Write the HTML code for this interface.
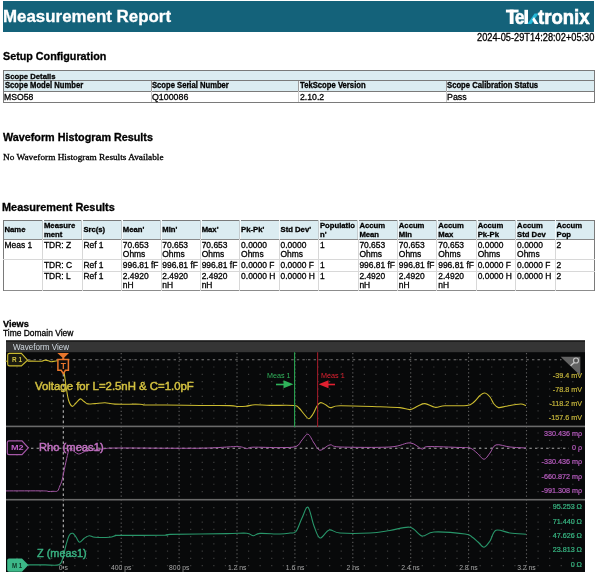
<!DOCTYPE html>
<html><head><meta charset="utf-8"><style>
html,body{margin:0;padding:0;background:#fff;width:600px;height:576px;overflow:hidden;position:relative}
#wrap{position:absolute;left:0;top:0;width:600px;height:576px;filter:blur(0.4px)}
</style></head><body><div id="wrap">
<div style="position:absolute;left:3px;top:1px;width:591px;height:31px;background:#14627a;z-index:1;"></div><div style="position:absolute;left:3.3px;top:70.3px;width:591.4000000000001px;height:20.700000000000003px;background:#dbecf1;z-index:1;"></div><div style="position:absolute;left:3.3px;top:69.8px;width:591.4000000000001px;height:1.2000000000000028px;background:#7a7a7a;z-index:2;"></div><div style="position:absolute;left:3.3px;top:80.2px;width:591.4000000000001px;height:1.2000000000000028px;background:#7a7a7a;z-index:2;"></div><div style="position:absolute;left:3.3px;top:90.5px;width:591.4000000000001px;height:1.2000000000000028px;background:#7a7a7a;z-index:2;"></div><div style="position:absolute;left:3.3px;top:101.5px;width:591.4000000000001px;height:1.1999999999999886px;background:#7a7a7a;z-index:2;"></div><div style="position:absolute;left:2.8px;top:70.3px;width:1.2000000000000002px;height:31.799999999999997px;background:#7a7a7a;z-index:2;"></div><div style="position:absolute;left:594.0px;top:70.3px;width:1.2000000000000455px;height:31.799999999999997px;background:#7a7a7a;z-index:2;"></div><div style="position:absolute;left:150.55000000000004px;top:80.7px;width:1.0px;height:10.299999999999997px;background:#9c9c9c;z-index:2;"></div><div style="position:absolute;left:151.55000000000004px;top:80.7px;width:0.5px;height:10.299999999999997px;background:#f4f9fa;z-index:2;"></div><div style="position:absolute;left:150.55000000000004px;top:91.0px;width:1.0px;height:11.099999999999994px;background:#c8c8c8;z-index:2;"></div><div style="position:absolute;left:298.40000000000003px;top:80.7px;width:1.0px;height:10.299999999999997px;background:#9c9c9c;z-index:2;"></div><div style="position:absolute;left:299.40000000000003px;top:80.7px;width:0.5px;height:10.299999999999997px;background:#f4f9fa;z-index:2;"></div><div style="position:absolute;left:298.40000000000003px;top:91.0px;width:1.0px;height:11.099999999999994px;background:#c8c8c8;z-index:2;"></div><div style="position:absolute;left:446.25000000000006px;top:80.7px;width:1.0px;height:10.299999999999997px;background:#9c9c9c;z-index:2;"></div><div style="position:absolute;left:447.25000000000006px;top:80.7px;width:0.5px;height:10.299999999999997px;background:#f4f9fa;z-index:2;"></div><div style="position:absolute;left:446.25000000000006px;top:91.0px;width:1.0px;height:11.099999999999994px;background:#c8c8c8;z-index:2;"></div><div style="position:absolute;left:3.3px;top:220.3px;width:591.4000000000001px;height:19.0px;background:#dbecf1;z-index:1;"></div><div style="position:absolute;left:3.3px;top:219.8px;width:591.4000000000001px;height:1.1999999999999886px;background:#7a7a7a;z-index:2;"></div><div style="position:absolute;left:3.3px;top:238.70000000000002px;width:591.4000000000001px;height:1.1999999999999886px;background:#8a8a8a;z-index:2;"></div><div style="position:absolute;left:3.3px;top:290.3px;width:591.4000000000001px;height:1.1999999999999886px;background:#8c8c8c;z-index:2;"></div><div style="position:absolute;left:2.8px;top:220.3px;width:1.2000000000000002px;height:71.0px;background:#7a7a7a;z-index:2;"></div><div style="position:absolute;left:594.0px;top:220.3px;width:1.2000000000000455px;height:71.0px;background:#7a7a7a;z-index:2;"></div><div style="position:absolute;left:42.026666666666664px;top:220.3px;width:0.8000000000000043px;height:19.0px;background:#c4cccf;z-index:2;"></div><div style="position:absolute;left:42.82666666666667px;top:220.3px;width:0.6000000000000014px;height:19.0px;background:#f4f9fa;z-index:2;"></div><div style="position:absolute;left:42.22666666666667px;top:239.3px;width:1.0px;height:52.0px;background:#d8d8d8;z-index:2;"></div><div style="position:absolute;left:81.45333333333333px;top:220.3px;width:0.7999999999999972px;height:19.0px;background:#c4cccf;z-index:2;"></div><div style="position:absolute;left:82.25333333333333px;top:220.3px;width:0.6000000000000085px;height:19.0px;background:#f4f9fa;z-index:2;"></div><div style="position:absolute;left:81.65333333333334px;top:239.3px;width:1.0px;height:52.0px;background:#d8d8d8;z-index:2;"></div><div style="position:absolute;left:120.88000000000001px;top:220.3px;width:0.7999999999999972px;height:19.0px;background:#c4cccf;z-index:2;"></div><div style="position:absolute;left:121.68px;top:220.3px;width:0.6000000000000085px;height:19.0px;background:#f4f9fa;z-index:2;"></div><div style="position:absolute;left:121.08000000000001px;top:239.3px;width:1.0px;height:52.0px;background:#d8d8d8;z-index:2;"></div><div style="position:absolute;left:160.3066666666667px;top:220.3px;width:0.799999999999983px;height:19.0px;background:#c4cccf;z-index:2;"></div><div style="position:absolute;left:161.10666666666668px;top:220.3px;width:0.5999999999999943px;height:19.0px;background:#f4f9fa;z-index:2;"></div><div style="position:absolute;left:160.5066666666667px;top:239.3px;width:1.0px;height:52.0px;background:#d8d8d8;z-index:2;"></div><div style="position:absolute;left:199.73333333333338px;top:220.3px;width:0.799999999999983px;height:19.0px;background:#c4cccf;z-index:2;"></div><div style="position:absolute;left:200.53333333333336px;top:220.3px;width:0.5999999999999943px;height:19.0px;background:#f4f9fa;z-index:2;"></div><div style="position:absolute;left:199.93333333333337px;top:239.3px;width:1.0px;height:52.0px;background:#d8d8d8;z-index:2;"></div><div style="position:absolute;left:239.16000000000005px;top:220.3px;width:0.799999999999983px;height:19.0px;background:#c4cccf;z-index:2;"></div><div style="position:absolute;left:239.96000000000004px;top:220.3px;width:0.5999999999999943px;height:19.0px;background:#f4f9fa;z-index:2;"></div><div style="position:absolute;left:239.36000000000004px;top:239.3px;width:1.0px;height:52.0px;background:#d8d8d8;z-index:2;"></div><div style="position:absolute;left:278.58666666666676px;top:220.3px;width:0.8000000000000114px;height:19.0px;background:#c4cccf;z-index:2;"></div><div style="position:absolute;left:279.38666666666677px;top:220.3px;width:0.5999999999999659px;height:19.0px;background:#f4f9fa;z-index:2;"></div><div style="position:absolute;left:278.78666666666675px;top:239.3px;width:1.0px;height:52.0px;background:#d8d8d8;z-index:2;"></div><div style="position:absolute;left:318.0133333333334px;top:220.3px;width:0.8000000000000114px;height:19.0px;background:#c4cccf;z-index:2;"></div><div style="position:absolute;left:318.8133333333334px;top:220.3px;width:0.5999999999999659px;height:19.0px;background:#f4f9fa;z-index:2;"></div><div style="position:absolute;left:318.21333333333337px;top:239.3px;width:1.0px;height:52.0px;background:#d8d8d8;z-index:2;"></div><div style="position:absolute;left:357.44000000000005px;top:220.3px;width:0.8000000000000114px;height:19.0px;background:#c4cccf;z-index:2;"></div><div style="position:absolute;left:358.24000000000007px;top:220.3px;width:0.5999999999999659px;height:19.0px;background:#f4f9fa;z-index:2;"></div><div style="position:absolute;left:357.64000000000004px;top:239.3px;width:1.0px;height:52.0px;background:#d8d8d8;z-index:2;"></div><div style="position:absolute;left:396.86666666666673px;top:220.3px;width:0.8000000000000114px;height:19.0px;background:#c4cccf;z-index:2;"></div><div style="position:absolute;left:397.66666666666674px;top:220.3px;width:0.5999999999999659px;height:19.0px;background:#f4f9fa;z-index:2;"></div><div style="position:absolute;left:397.0666666666667px;top:239.3px;width:1.0px;height:52.0px;background:#d8d8d8;z-index:2;"></div><div style="position:absolute;left:436.29333333333346px;top:220.3px;width:0.8000000000000114px;height:19.0px;background:#c4cccf;z-index:2;"></div><div style="position:absolute;left:437.0933333333335px;top:220.3px;width:0.5999999999999659px;height:19.0px;background:#f4f9fa;z-index:2;"></div><div style="position:absolute;left:436.49333333333345px;top:239.3px;width:1.0px;height:52.0px;background:#d8d8d8;z-index:2;"></div><div style="position:absolute;left:475.7200000000001px;top:220.3px;width:0.8000000000000114px;height:19.0px;background:#c4cccf;z-index:2;"></div><div style="position:absolute;left:476.5200000000001px;top:220.3px;width:0.5999999999999659px;height:19.0px;background:#f4f9fa;z-index:2;"></div><div style="position:absolute;left:475.9200000000001px;top:239.3px;width:1.0px;height:52.0px;background:#d8d8d8;z-index:2;"></div><div style="position:absolute;left:515.1466666666666px;top:220.3px;width:0.8000000000000682px;height:19.0px;background:#c4cccf;z-index:2;"></div><div style="position:absolute;left:515.9466666666667px;top:220.3px;width:0.6000000000000227px;height:19.0px;background:#f4f9fa;z-index:2;"></div><div style="position:absolute;left:515.3466666666667px;top:239.3px;width:1.0px;height:52.0px;background:#d8d8d8;z-index:2;"></div><div style="position:absolute;left:554.5733333333334px;top:220.3px;width:0.8000000000000682px;height:19.0px;background:#c4cccf;z-index:2;"></div><div style="position:absolute;left:555.3733333333334px;top:220.3px;width:0.6000000000000227px;height:19.0px;background:#f4f9fa;z-index:2;"></div><div style="position:absolute;left:554.7733333333334px;top:239.3px;width:1.0px;height:52.0px;background:#d8d8d8;z-index:2;"></div><div style="position:absolute;left:3.3px;top:259.2px;width:591.4000000000001px;height:1.0px;background:#d8d8d8;z-index:2;"></div><div style="position:absolute;left:42.72666666666667px;top:270.5px;width:551.9733333333334px;height:1.0px;background:#d8d8d8;z-index:2;"></div>
<svg style="position:absolute;left:0;top:0;z-index:3" width="600" height="576" viewBox="0 0 600 576">
<rect x="505.9" y="9.6" width="12.7" height="2.9" fill="#fff"/><rect x="509.7" y="9.6" width="3.9" height="14.4" fill="#fff"/><rect x="524.4" y="9.8" width="3.6" height="14.2" fill="#fff"/><path d="M527.4,24 L534.6,13.4 H538.6 L531.4,24 Z" fill="#25b8d8"/><path d="M532.2,19.6 L534,17 L538.6,24 H534.6 Z" fill="#fff"/><rect x="6" y="340.5" width="579" height="231.5" fill="#08090a"/><rect x="6" y="340.5" width="579" height="11.699999999999989" fill="#353535"/><rect x="6" y="340.7" width="579" height="1" fill="#151515"/><path d="M16.38,359.70h1.2M16.38,367.02h1.2M16.38,374.34h1.2M16.38,381.66h1.2M16.38,388.98h1.2M16.38,396.30h1.2M16.38,403.62h1.2M16.38,410.94h1.2M16.38,418.26h1.2M27.96,359.70h1.2M27.96,367.02h1.2M27.96,374.34h1.2M27.96,381.66h1.2M27.96,388.98h1.2M27.96,396.30h1.2M27.96,403.62h1.2M27.96,410.94h1.2M27.96,418.26h1.2M39.54,359.70h1.2M39.54,367.02h1.2M39.54,374.34h1.2M39.54,381.66h1.2M39.54,388.98h1.2M39.54,396.30h1.2M39.54,403.62h1.2M39.54,410.94h1.2M39.54,418.26h1.2M51.12,359.70h1.2M51.12,367.02h1.2M51.12,374.34h1.2M51.12,381.66h1.2M51.12,388.98h1.2M51.12,396.30h1.2M51.12,403.62h1.2M51.12,410.94h1.2M51.12,418.26h1.2M74.28,359.70h1.2M74.28,367.02h1.2M74.28,374.34h1.2M74.28,381.66h1.2M74.28,388.98h1.2M74.28,396.30h1.2M74.28,403.62h1.2M74.28,410.94h1.2M74.28,418.26h1.2M85.86,359.70h1.2M85.86,367.02h1.2M85.86,374.34h1.2M85.86,381.66h1.2M85.86,388.98h1.2M85.86,396.30h1.2M85.86,403.62h1.2M85.86,410.94h1.2M85.86,418.26h1.2M97.44,359.70h1.2M97.44,367.02h1.2M97.44,374.34h1.2M97.44,381.66h1.2M97.44,388.98h1.2M97.44,396.30h1.2M97.44,403.62h1.2M97.44,410.94h1.2M97.44,418.26h1.2M109.02,359.70h1.2M109.02,367.02h1.2M109.02,374.34h1.2M109.02,381.66h1.2M109.02,388.98h1.2M109.02,396.30h1.2M109.02,403.62h1.2M109.02,410.94h1.2M109.02,418.26h1.2M132.18,359.70h1.2M132.18,367.02h1.2M132.18,374.34h1.2M132.18,381.66h1.2M132.18,388.98h1.2M132.18,396.30h1.2M132.18,403.62h1.2M132.18,410.94h1.2M132.18,418.26h1.2M143.76,359.70h1.2M143.76,367.02h1.2M143.76,374.34h1.2M143.76,381.66h1.2M143.76,388.98h1.2M143.76,396.30h1.2M143.76,403.62h1.2M143.76,410.94h1.2M143.76,418.26h1.2M155.34,359.70h1.2M155.34,367.02h1.2M155.34,374.34h1.2M155.34,381.66h1.2M155.34,388.98h1.2M155.34,396.30h1.2M155.34,403.62h1.2M155.34,410.94h1.2M155.34,418.26h1.2M166.92,359.70h1.2M166.92,367.02h1.2M166.92,374.34h1.2M166.92,381.66h1.2M166.92,388.98h1.2M166.92,396.30h1.2M166.92,403.62h1.2M166.92,410.94h1.2M166.92,418.26h1.2M190.08,359.70h1.2M190.08,367.02h1.2M190.08,374.34h1.2M190.08,381.66h1.2M190.08,388.98h1.2M190.08,396.30h1.2M190.08,403.62h1.2M190.08,410.94h1.2M190.08,418.26h1.2M201.66,359.70h1.2M201.66,367.02h1.2M201.66,374.34h1.2M201.66,381.66h1.2M201.66,388.98h1.2M201.66,396.30h1.2M201.66,403.62h1.2M201.66,410.94h1.2M201.66,418.26h1.2M213.24,359.70h1.2M213.24,367.02h1.2M213.24,374.34h1.2M213.24,381.66h1.2M213.24,388.98h1.2M213.24,396.30h1.2M213.24,403.62h1.2M213.24,410.94h1.2M213.24,418.26h1.2M224.82,359.70h1.2M224.82,367.02h1.2M224.82,374.34h1.2M224.82,381.66h1.2M224.82,388.98h1.2M224.82,396.30h1.2M224.82,403.62h1.2M224.82,410.94h1.2M224.82,418.26h1.2M247.98,359.70h1.2M247.98,367.02h1.2M247.98,374.34h1.2M247.98,381.66h1.2M247.98,388.98h1.2M247.98,396.30h1.2M247.98,403.62h1.2M247.98,410.94h1.2M247.98,418.26h1.2M259.56,359.70h1.2M259.56,367.02h1.2M259.56,374.34h1.2M259.56,381.66h1.2M259.56,388.98h1.2M259.56,396.30h1.2M259.56,403.62h1.2M259.56,410.94h1.2M259.56,418.26h1.2M271.14,359.70h1.2M271.14,367.02h1.2M271.14,374.34h1.2M271.14,381.66h1.2M271.14,388.98h1.2M271.14,396.30h1.2M271.14,403.62h1.2M271.14,410.94h1.2M271.14,418.26h1.2M282.72,359.70h1.2M282.72,367.02h1.2M282.72,374.34h1.2M282.72,381.66h1.2M282.72,388.98h1.2M282.72,396.30h1.2M282.72,403.62h1.2M282.72,410.94h1.2M282.72,418.26h1.2M305.88,359.70h1.2M305.88,367.02h1.2M305.88,374.34h1.2M305.88,381.66h1.2M305.88,388.98h1.2M305.88,396.30h1.2M305.88,403.62h1.2M305.88,410.94h1.2M305.88,418.26h1.2M317.46,359.70h1.2M317.46,367.02h1.2M317.46,374.34h1.2M317.46,381.66h1.2M317.46,388.98h1.2M317.46,396.30h1.2M317.46,403.62h1.2M317.46,410.94h1.2M317.46,418.26h1.2M329.04,359.70h1.2M329.04,367.02h1.2M329.04,374.34h1.2M329.04,381.66h1.2M329.04,388.98h1.2M329.04,396.30h1.2M329.04,403.62h1.2M329.04,410.94h1.2M329.04,418.26h1.2M340.62,359.70h1.2M340.62,367.02h1.2M340.62,374.34h1.2M340.62,381.66h1.2M340.62,388.98h1.2M340.62,396.30h1.2M340.62,403.62h1.2M340.62,410.94h1.2M340.62,418.26h1.2M363.78,359.70h1.2M363.78,367.02h1.2M363.78,374.34h1.2M363.78,381.66h1.2M363.78,388.98h1.2M363.78,396.30h1.2M363.78,403.62h1.2M363.78,410.94h1.2M363.78,418.26h1.2M375.36,359.70h1.2M375.36,367.02h1.2M375.36,374.34h1.2M375.36,381.66h1.2M375.36,388.98h1.2M375.36,396.30h1.2M375.36,403.62h1.2M375.36,410.94h1.2M375.36,418.26h1.2M386.94,359.70h1.2M386.94,367.02h1.2M386.94,374.34h1.2M386.94,381.66h1.2M386.94,388.98h1.2M386.94,396.30h1.2M386.94,403.62h1.2M386.94,410.94h1.2M386.94,418.26h1.2M398.52,359.70h1.2M398.52,367.02h1.2M398.52,374.34h1.2M398.52,381.66h1.2M398.52,388.98h1.2M398.52,396.30h1.2M398.52,403.62h1.2M398.52,410.94h1.2M398.52,418.26h1.2M421.68,359.70h1.2M421.68,367.02h1.2M421.68,374.34h1.2M421.68,381.66h1.2M421.68,388.98h1.2M421.68,396.30h1.2M421.68,403.62h1.2M421.68,410.94h1.2M421.68,418.26h1.2M433.26,359.70h1.2M433.26,367.02h1.2M433.26,374.34h1.2M433.26,381.66h1.2M433.26,388.98h1.2M433.26,396.30h1.2M433.26,403.62h1.2M433.26,410.94h1.2M433.26,418.26h1.2M444.84,359.70h1.2M444.84,367.02h1.2M444.84,374.34h1.2M444.84,381.66h1.2M444.84,388.98h1.2M444.84,396.30h1.2M444.84,403.62h1.2M444.84,410.94h1.2M444.84,418.26h1.2M456.42,359.70h1.2M456.42,367.02h1.2M456.42,374.34h1.2M456.42,381.66h1.2M456.42,388.98h1.2M456.42,396.30h1.2M456.42,403.62h1.2M456.42,410.94h1.2M456.42,418.26h1.2M479.58,359.70h1.2M479.58,367.02h1.2M479.58,374.34h1.2M479.58,381.66h1.2M479.58,388.98h1.2M479.58,396.30h1.2M479.58,403.62h1.2M479.58,410.94h1.2M479.58,418.26h1.2M491.16,359.70h1.2M491.16,367.02h1.2M491.16,374.34h1.2M491.16,381.66h1.2M491.16,388.98h1.2M491.16,396.30h1.2M491.16,403.62h1.2M491.16,410.94h1.2M491.16,418.26h1.2M502.74,359.70h1.2M502.74,367.02h1.2M502.74,374.34h1.2M502.74,381.66h1.2M502.74,388.98h1.2M502.74,396.30h1.2M502.74,403.62h1.2M502.74,410.94h1.2M502.74,418.26h1.2M514.32,359.70h1.2M514.32,367.02h1.2M514.32,374.34h1.2M514.32,381.66h1.2M514.32,388.98h1.2M514.32,396.30h1.2M514.32,403.62h1.2M514.32,410.94h1.2M514.32,418.26h1.2M537.48,359.70h1.2M537.48,367.02h1.2M537.48,374.34h1.2M537.48,381.66h1.2M537.48,388.98h1.2M537.48,396.30h1.2M537.48,403.62h1.2M537.48,410.94h1.2M537.48,418.26h1.2M549.06,359.70h1.2M549.06,367.02h1.2M549.06,374.34h1.2M549.06,381.66h1.2M549.06,388.98h1.2M549.06,396.30h1.2M549.06,403.62h1.2M549.06,410.94h1.2M549.06,418.26h1.2M560.64,359.70h1.2M560.64,367.02h1.2M560.64,374.34h1.2M560.64,381.66h1.2M560.64,388.98h1.2M560.64,396.30h1.2M560.64,403.62h1.2M560.64,410.94h1.2M560.64,418.26h1.2M572.22,359.70h1.2M572.22,367.02h1.2M572.22,374.34h1.2M572.22,381.66h1.2M572.22,388.98h1.2M572.22,396.30h1.2M572.22,403.62h1.2M572.22,410.94h1.2M572.22,418.26h1.2M16.38,433.00h1.2M16.38,440.32h1.2M16.38,447.64h1.2M16.38,454.96h1.2M16.38,462.28h1.2M16.38,469.60h1.2M16.38,476.92h1.2M16.38,484.24h1.2M16.38,491.56h1.2M27.96,433.00h1.2M27.96,440.32h1.2M27.96,447.64h1.2M27.96,454.96h1.2M27.96,462.28h1.2M27.96,469.60h1.2M27.96,476.92h1.2M27.96,484.24h1.2M27.96,491.56h1.2M39.54,433.00h1.2M39.54,440.32h1.2M39.54,447.64h1.2M39.54,454.96h1.2M39.54,462.28h1.2M39.54,469.60h1.2M39.54,476.92h1.2M39.54,484.24h1.2M39.54,491.56h1.2M51.12,433.00h1.2M51.12,440.32h1.2M51.12,447.64h1.2M51.12,454.96h1.2M51.12,462.28h1.2M51.12,469.60h1.2M51.12,476.92h1.2M51.12,484.24h1.2M51.12,491.56h1.2M74.28,433.00h1.2M74.28,440.32h1.2M74.28,447.64h1.2M74.28,454.96h1.2M74.28,462.28h1.2M74.28,469.60h1.2M74.28,476.92h1.2M74.28,484.24h1.2M74.28,491.56h1.2M85.86,433.00h1.2M85.86,440.32h1.2M85.86,447.64h1.2M85.86,454.96h1.2M85.86,462.28h1.2M85.86,469.60h1.2M85.86,476.92h1.2M85.86,484.24h1.2M85.86,491.56h1.2M97.44,433.00h1.2M97.44,440.32h1.2M97.44,447.64h1.2M97.44,454.96h1.2M97.44,462.28h1.2M97.44,469.60h1.2M97.44,476.92h1.2M97.44,484.24h1.2M97.44,491.56h1.2M109.02,433.00h1.2M109.02,440.32h1.2M109.02,447.64h1.2M109.02,454.96h1.2M109.02,462.28h1.2M109.02,469.60h1.2M109.02,476.92h1.2M109.02,484.24h1.2M109.02,491.56h1.2M132.18,433.00h1.2M132.18,440.32h1.2M132.18,447.64h1.2M132.18,454.96h1.2M132.18,462.28h1.2M132.18,469.60h1.2M132.18,476.92h1.2M132.18,484.24h1.2M132.18,491.56h1.2M143.76,433.00h1.2M143.76,440.32h1.2M143.76,447.64h1.2M143.76,454.96h1.2M143.76,462.28h1.2M143.76,469.60h1.2M143.76,476.92h1.2M143.76,484.24h1.2M143.76,491.56h1.2M155.34,433.00h1.2M155.34,440.32h1.2M155.34,447.64h1.2M155.34,454.96h1.2M155.34,462.28h1.2M155.34,469.60h1.2M155.34,476.92h1.2M155.34,484.24h1.2M155.34,491.56h1.2M166.92,433.00h1.2M166.92,440.32h1.2M166.92,447.64h1.2M166.92,454.96h1.2M166.92,462.28h1.2M166.92,469.60h1.2M166.92,476.92h1.2M166.92,484.24h1.2M166.92,491.56h1.2M190.08,433.00h1.2M190.08,440.32h1.2M190.08,447.64h1.2M190.08,454.96h1.2M190.08,462.28h1.2M190.08,469.60h1.2M190.08,476.92h1.2M190.08,484.24h1.2M190.08,491.56h1.2M201.66,433.00h1.2M201.66,440.32h1.2M201.66,447.64h1.2M201.66,454.96h1.2M201.66,462.28h1.2M201.66,469.60h1.2M201.66,476.92h1.2M201.66,484.24h1.2M201.66,491.56h1.2M213.24,433.00h1.2M213.24,440.32h1.2M213.24,447.64h1.2M213.24,454.96h1.2M213.24,462.28h1.2M213.24,469.60h1.2M213.24,476.92h1.2M213.24,484.24h1.2M213.24,491.56h1.2M224.82,433.00h1.2M224.82,440.32h1.2M224.82,447.64h1.2M224.82,454.96h1.2M224.82,462.28h1.2M224.82,469.60h1.2M224.82,476.92h1.2M224.82,484.24h1.2M224.82,491.56h1.2M247.98,433.00h1.2M247.98,440.32h1.2M247.98,447.64h1.2M247.98,454.96h1.2M247.98,462.28h1.2M247.98,469.60h1.2M247.98,476.92h1.2M247.98,484.24h1.2M247.98,491.56h1.2M259.56,433.00h1.2M259.56,440.32h1.2M259.56,447.64h1.2M259.56,454.96h1.2M259.56,462.28h1.2M259.56,469.60h1.2M259.56,476.92h1.2M259.56,484.24h1.2M259.56,491.56h1.2M271.14,433.00h1.2M271.14,440.32h1.2M271.14,447.64h1.2M271.14,454.96h1.2M271.14,462.28h1.2M271.14,469.60h1.2M271.14,476.92h1.2M271.14,484.24h1.2M271.14,491.56h1.2M282.72,433.00h1.2M282.72,440.32h1.2M282.72,447.64h1.2M282.72,454.96h1.2M282.72,462.28h1.2M282.72,469.60h1.2M282.72,476.92h1.2M282.72,484.24h1.2M282.72,491.56h1.2M305.88,433.00h1.2M305.88,440.32h1.2M305.88,447.64h1.2M305.88,454.96h1.2M305.88,462.28h1.2M305.88,469.60h1.2M305.88,476.92h1.2M305.88,484.24h1.2M305.88,491.56h1.2M317.46,433.00h1.2M317.46,440.32h1.2M317.46,447.64h1.2M317.46,454.96h1.2M317.46,462.28h1.2M317.46,469.60h1.2M317.46,476.92h1.2M317.46,484.24h1.2M317.46,491.56h1.2M329.04,433.00h1.2M329.04,440.32h1.2M329.04,447.64h1.2M329.04,454.96h1.2M329.04,462.28h1.2M329.04,469.60h1.2M329.04,476.92h1.2M329.04,484.24h1.2M329.04,491.56h1.2M340.62,433.00h1.2M340.62,440.32h1.2M340.62,447.64h1.2M340.62,454.96h1.2M340.62,462.28h1.2M340.62,469.60h1.2M340.62,476.92h1.2M340.62,484.24h1.2M340.62,491.56h1.2M363.78,433.00h1.2M363.78,440.32h1.2M363.78,447.64h1.2M363.78,454.96h1.2M363.78,462.28h1.2M363.78,469.60h1.2M363.78,476.92h1.2M363.78,484.24h1.2M363.78,491.56h1.2M375.36,433.00h1.2M375.36,440.32h1.2M375.36,447.64h1.2M375.36,454.96h1.2M375.36,462.28h1.2M375.36,469.60h1.2M375.36,476.92h1.2M375.36,484.24h1.2M375.36,491.56h1.2M386.94,433.00h1.2M386.94,440.32h1.2M386.94,447.64h1.2M386.94,454.96h1.2M386.94,462.28h1.2M386.94,469.60h1.2M386.94,476.92h1.2M386.94,484.24h1.2M386.94,491.56h1.2M398.52,433.00h1.2M398.52,440.32h1.2M398.52,447.64h1.2M398.52,454.96h1.2M398.52,462.28h1.2M398.52,469.60h1.2M398.52,476.92h1.2M398.52,484.24h1.2M398.52,491.56h1.2M421.68,433.00h1.2M421.68,440.32h1.2M421.68,447.64h1.2M421.68,454.96h1.2M421.68,462.28h1.2M421.68,469.60h1.2M421.68,476.92h1.2M421.68,484.24h1.2M421.68,491.56h1.2M433.26,433.00h1.2M433.26,440.32h1.2M433.26,447.64h1.2M433.26,454.96h1.2M433.26,462.28h1.2M433.26,469.60h1.2M433.26,476.92h1.2M433.26,484.24h1.2M433.26,491.56h1.2M444.84,433.00h1.2M444.84,440.32h1.2M444.84,447.64h1.2M444.84,454.96h1.2M444.84,462.28h1.2M444.84,469.60h1.2M444.84,476.92h1.2M444.84,484.24h1.2M444.84,491.56h1.2M456.42,433.00h1.2M456.42,440.32h1.2M456.42,447.64h1.2M456.42,454.96h1.2M456.42,462.28h1.2M456.42,469.60h1.2M456.42,476.92h1.2M456.42,484.24h1.2M456.42,491.56h1.2M479.58,433.00h1.2M479.58,440.32h1.2M479.58,447.64h1.2M479.58,454.96h1.2M479.58,462.28h1.2M479.58,469.60h1.2M479.58,476.92h1.2M479.58,484.24h1.2M479.58,491.56h1.2M491.16,433.00h1.2M491.16,440.32h1.2M491.16,447.64h1.2M491.16,454.96h1.2M491.16,462.28h1.2M491.16,469.60h1.2M491.16,476.92h1.2M491.16,484.24h1.2M491.16,491.56h1.2M502.74,433.00h1.2M502.74,440.32h1.2M502.74,447.64h1.2M502.74,454.96h1.2M502.74,462.28h1.2M502.74,469.60h1.2M502.74,476.92h1.2M502.74,484.24h1.2M502.74,491.56h1.2M514.32,433.00h1.2M514.32,440.32h1.2M514.32,447.64h1.2M514.32,454.96h1.2M514.32,462.28h1.2M514.32,469.60h1.2M514.32,476.92h1.2M514.32,484.24h1.2M514.32,491.56h1.2M537.48,433.00h1.2M537.48,440.32h1.2M537.48,447.64h1.2M537.48,454.96h1.2M537.48,462.28h1.2M537.48,469.60h1.2M537.48,476.92h1.2M537.48,484.24h1.2M537.48,491.56h1.2M549.06,433.00h1.2M549.06,440.32h1.2M549.06,447.64h1.2M549.06,454.96h1.2M549.06,462.28h1.2M549.06,469.60h1.2M549.06,476.92h1.2M549.06,484.24h1.2M549.06,491.56h1.2M560.64,433.00h1.2M560.64,440.32h1.2M560.64,447.64h1.2M560.64,454.96h1.2M560.64,462.28h1.2M560.64,469.60h1.2M560.64,476.92h1.2M560.64,484.24h1.2M560.64,491.56h1.2M572.22,433.00h1.2M572.22,440.32h1.2M572.22,447.64h1.2M572.22,454.96h1.2M572.22,462.28h1.2M572.22,469.60h1.2M572.22,476.92h1.2M572.22,484.24h1.2M572.22,491.56h1.2M16.38,507.60h1.2M16.38,514.85h1.2M16.38,522.10h1.2M16.38,529.35h1.2M16.38,536.60h1.2M16.38,543.85h1.2M16.38,551.10h1.2M16.38,558.35h1.2M16.38,565.60h1.2M27.96,507.60h1.2M27.96,514.85h1.2M27.96,522.10h1.2M27.96,529.35h1.2M27.96,536.60h1.2M27.96,543.85h1.2M27.96,551.10h1.2M27.96,558.35h1.2M27.96,565.60h1.2M39.54,507.60h1.2M39.54,514.85h1.2M39.54,522.10h1.2M39.54,529.35h1.2M39.54,536.60h1.2M39.54,543.85h1.2M39.54,551.10h1.2M39.54,558.35h1.2M39.54,565.60h1.2M51.12,507.60h1.2M51.12,514.85h1.2M51.12,522.10h1.2M51.12,529.35h1.2M51.12,536.60h1.2M51.12,543.85h1.2M51.12,551.10h1.2M51.12,558.35h1.2M51.12,565.60h1.2M74.28,507.60h1.2M74.28,514.85h1.2M74.28,522.10h1.2M74.28,529.35h1.2M74.28,536.60h1.2M74.28,543.85h1.2M74.28,551.10h1.2M74.28,558.35h1.2M74.28,565.60h1.2M85.86,507.60h1.2M85.86,514.85h1.2M85.86,522.10h1.2M85.86,529.35h1.2M85.86,536.60h1.2M85.86,543.85h1.2M85.86,551.10h1.2M85.86,558.35h1.2M85.86,565.60h1.2M97.44,507.60h1.2M97.44,514.85h1.2M97.44,522.10h1.2M97.44,529.35h1.2M97.44,536.60h1.2M97.44,543.85h1.2M97.44,551.10h1.2M97.44,558.35h1.2M97.44,565.60h1.2M109.02,507.60h1.2M109.02,514.85h1.2M109.02,522.10h1.2M109.02,529.35h1.2M109.02,536.60h1.2M109.02,543.85h1.2M109.02,551.10h1.2M109.02,558.35h1.2M109.02,565.60h1.2M132.18,507.60h1.2M132.18,514.85h1.2M132.18,522.10h1.2M132.18,529.35h1.2M132.18,536.60h1.2M132.18,543.85h1.2M132.18,551.10h1.2M132.18,558.35h1.2M132.18,565.60h1.2M143.76,507.60h1.2M143.76,514.85h1.2M143.76,522.10h1.2M143.76,529.35h1.2M143.76,536.60h1.2M143.76,543.85h1.2M143.76,551.10h1.2M143.76,558.35h1.2M143.76,565.60h1.2M155.34,507.60h1.2M155.34,514.85h1.2M155.34,522.10h1.2M155.34,529.35h1.2M155.34,536.60h1.2M155.34,543.85h1.2M155.34,551.10h1.2M155.34,558.35h1.2M155.34,565.60h1.2M166.92,507.60h1.2M166.92,514.85h1.2M166.92,522.10h1.2M166.92,529.35h1.2M166.92,536.60h1.2M166.92,543.85h1.2M166.92,551.10h1.2M166.92,558.35h1.2M166.92,565.60h1.2M190.08,507.60h1.2M190.08,514.85h1.2M190.08,522.10h1.2M190.08,529.35h1.2M190.08,536.60h1.2M190.08,543.85h1.2M190.08,551.10h1.2M190.08,558.35h1.2M190.08,565.60h1.2M201.66,507.60h1.2M201.66,514.85h1.2M201.66,522.10h1.2M201.66,529.35h1.2M201.66,536.60h1.2M201.66,543.85h1.2M201.66,551.10h1.2M201.66,558.35h1.2M201.66,565.60h1.2M213.24,507.60h1.2M213.24,514.85h1.2M213.24,522.10h1.2M213.24,529.35h1.2M213.24,536.60h1.2M213.24,543.85h1.2M213.24,551.10h1.2M213.24,558.35h1.2M213.24,565.60h1.2M224.82,507.60h1.2M224.82,514.85h1.2M224.82,522.10h1.2M224.82,529.35h1.2M224.82,536.60h1.2M224.82,543.85h1.2M224.82,551.10h1.2M224.82,558.35h1.2M224.82,565.60h1.2M247.98,507.60h1.2M247.98,514.85h1.2M247.98,522.10h1.2M247.98,529.35h1.2M247.98,536.60h1.2M247.98,543.85h1.2M247.98,551.10h1.2M247.98,558.35h1.2M247.98,565.60h1.2M259.56,507.60h1.2M259.56,514.85h1.2M259.56,522.10h1.2M259.56,529.35h1.2M259.56,536.60h1.2M259.56,543.85h1.2M259.56,551.10h1.2M259.56,558.35h1.2M259.56,565.60h1.2M271.14,507.60h1.2M271.14,514.85h1.2M271.14,522.10h1.2M271.14,529.35h1.2M271.14,536.60h1.2M271.14,543.85h1.2M271.14,551.10h1.2M271.14,558.35h1.2M271.14,565.60h1.2M282.72,507.60h1.2M282.72,514.85h1.2M282.72,522.10h1.2M282.72,529.35h1.2M282.72,536.60h1.2M282.72,543.85h1.2M282.72,551.10h1.2M282.72,558.35h1.2M282.72,565.60h1.2M305.88,507.60h1.2M305.88,514.85h1.2M305.88,522.10h1.2M305.88,529.35h1.2M305.88,536.60h1.2M305.88,543.85h1.2M305.88,551.10h1.2M305.88,558.35h1.2M305.88,565.60h1.2M317.46,507.60h1.2M317.46,514.85h1.2M317.46,522.10h1.2M317.46,529.35h1.2M317.46,536.60h1.2M317.46,543.85h1.2M317.46,551.10h1.2M317.46,558.35h1.2M317.46,565.60h1.2M329.04,507.60h1.2M329.04,514.85h1.2M329.04,522.10h1.2M329.04,529.35h1.2M329.04,536.60h1.2M329.04,543.85h1.2M329.04,551.10h1.2M329.04,558.35h1.2M329.04,565.60h1.2M340.62,507.60h1.2M340.62,514.85h1.2M340.62,522.10h1.2M340.62,529.35h1.2M340.62,536.60h1.2M340.62,543.85h1.2M340.62,551.10h1.2M340.62,558.35h1.2M340.62,565.60h1.2M363.78,507.60h1.2M363.78,514.85h1.2M363.78,522.10h1.2M363.78,529.35h1.2M363.78,536.60h1.2M363.78,543.85h1.2M363.78,551.10h1.2M363.78,558.35h1.2M363.78,565.60h1.2M375.36,507.60h1.2M375.36,514.85h1.2M375.36,522.10h1.2M375.36,529.35h1.2M375.36,536.60h1.2M375.36,543.85h1.2M375.36,551.10h1.2M375.36,558.35h1.2M375.36,565.60h1.2M386.94,507.60h1.2M386.94,514.85h1.2M386.94,522.10h1.2M386.94,529.35h1.2M386.94,536.60h1.2M386.94,543.85h1.2M386.94,551.10h1.2M386.94,558.35h1.2M386.94,565.60h1.2M398.52,507.60h1.2M398.52,514.85h1.2M398.52,522.10h1.2M398.52,529.35h1.2M398.52,536.60h1.2M398.52,543.85h1.2M398.52,551.10h1.2M398.52,558.35h1.2M398.52,565.60h1.2M421.68,507.60h1.2M421.68,514.85h1.2M421.68,522.10h1.2M421.68,529.35h1.2M421.68,536.60h1.2M421.68,543.85h1.2M421.68,551.10h1.2M421.68,558.35h1.2M421.68,565.60h1.2M433.26,507.60h1.2M433.26,514.85h1.2M433.26,522.10h1.2M433.26,529.35h1.2M433.26,536.60h1.2M433.26,543.85h1.2M433.26,551.10h1.2M433.26,558.35h1.2M433.26,565.60h1.2M444.84,507.60h1.2M444.84,514.85h1.2M444.84,522.10h1.2M444.84,529.35h1.2M444.84,536.60h1.2M444.84,543.85h1.2M444.84,551.10h1.2M444.84,558.35h1.2M444.84,565.60h1.2M456.42,507.60h1.2M456.42,514.85h1.2M456.42,522.10h1.2M456.42,529.35h1.2M456.42,536.60h1.2M456.42,543.85h1.2M456.42,551.10h1.2M456.42,558.35h1.2M456.42,565.60h1.2M479.58,507.60h1.2M479.58,514.85h1.2M479.58,522.10h1.2M479.58,529.35h1.2M479.58,536.60h1.2M479.58,543.85h1.2M479.58,551.10h1.2M479.58,558.35h1.2M479.58,565.60h1.2M491.16,507.60h1.2M491.16,514.85h1.2M491.16,522.10h1.2M491.16,529.35h1.2M491.16,536.60h1.2M491.16,543.85h1.2M491.16,551.10h1.2M491.16,558.35h1.2M491.16,565.60h1.2M502.74,507.60h1.2M502.74,514.85h1.2M502.74,522.10h1.2M502.74,529.35h1.2M502.74,536.60h1.2M502.74,543.85h1.2M502.74,551.10h1.2M502.74,558.35h1.2M502.74,565.60h1.2M514.32,507.60h1.2M514.32,514.85h1.2M514.32,522.10h1.2M514.32,529.35h1.2M514.32,536.60h1.2M514.32,543.85h1.2M514.32,551.10h1.2M514.32,558.35h1.2M514.32,565.60h1.2M537.48,507.60h1.2M537.48,514.85h1.2M537.48,522.10h1.2M537.48,529.35h1.2M537.48,536.60h1.2M537.48,543.85h1.2M537.48,551.10h1.2M537.48,558.35h1.2M537.48,565.60h1.2M549.06,507.60h1.2M549.06,514.85h1.2M549.06,522.10h1.2M549.06,529.35h1.2M549.06,536.60h1.2M549.06,543.85h1.2M549.06,551.10h1.2M549.06,558.35h1.2M549.06,565.60h1.2M560.64,507.60h1.2M560.64,514.85h1.2M560.64,522.10h1.2M560.64,529.35h1.2M560.64,536.60h1.2M560.64,543.85h1.2M560.64,551.10h1.2M560.64,558.35h1.2M560.64,565.60h1.2M572.22,507.60h1.2M572.22,514.85h1.2M572.22,522.10h1.2M572.22,529.35h1.2M572.22,536.60h1.2M572.22,543.85h1.2M572.22,551.10h1.2M572.22,558.35h1.2M572.22,565.60h1.2" stroke="#3e3e3e" stroke-width="1.2" fill="none"/><line x1="63.3" y1="353" x2="63.3" y2="572" stroke="#b8b8b8" stroke-width="1.1" stroke-dasharray="2.6 2.6"/><line x1="121.19999999999999" y1="353" x2="121.19999999999999" y2="572" stroke="#5e5e5e" stroke-width="1.1" stroke-dasharray="1.3 2.55"/><line x1="179.1" y1="353" x2="179.1" y2="572" stroke="#5e5e5e" stroke-width="1.1" stroke-dasharray="1.3 2.55"/><line x1="237.0" y1="353" x2="237.0" y2="572" stroke="#5e5e5e" stroke-width="1.1" stroke-dasharray="1.3 2.55"/><line x1="294.9" y1="353" x2="294.9" y2="572" stroke="#5e5e5e" stroke-width="1.1" stroke-dasharray="1.3 2.55"/><line x1="352.8" y1="353" x2="352.8" y2="572" stroke="#5e5e5e" stroke-width="1.1" stroke-dasharray="1.3 2.55"/><line x1="410.7" y1="353" x2="410.7" y2="572" stroke="#5e5e5e" stroke-width="1.1" stroke-dasharray="1.3 2.55"/><line x1="468.6" y1="353" x2="468.6" y2="572" stroke="#5e5e5e" stroke-width="1.1" stroke-dasharray="1.3 2.55"/><line x1="526.5" y1="353" x2="526.5" y2="572" stroke="#5e5e5e" stroke-width="1.1" stroke-dasharray="1.3 2.55"/><rect x="6" y="425.6" width="579" height="1.6" fill="#6a6a6a"/><rect x="6" y="498.9" width="579" height="1.6" fill="#6a6a6a"/><line x1="28" y1="359.7" x2="561" y2="359.7" stroke="#767676" stroke-width="1.1" stroke-dasharray="2.4 3.2"/><line x1="31" y1="448.2" x2="569" y2="448.2" stroke="#a8a8a8" stroke-width="1.1" stroke-dasharray="2.4 3.2"/><path d="M27.60,361.10 C29.00,361.12 33.60,361.18 36.00,361.20 C38.40,361.22 40.47,361.38 42.00,361.20 C43.53,361.02 43.97,360.12 45.20,360.10 C46.43,360.08 48.35,360.83 49.40,361.10 C50.45,361.37 50.40,361.72 51.50,361.70 C52.60,361.68 54.58,361.07 56.00,361.00 C57.42,360.93 58.78,360.13 60.00,361.30 C61.22,362.47 62.30,363.88 63.30,368.00 C64.30,372.12 65.13,380.67 66.00,386.00 C66.87,391.33 67.47,396.62 68.50,400.00 C69.53,403.38 70.95,405.80 72.20,406.30 C73.45,406.80 74.65,404.23 76.00,403.00 C77.35,401.77 78.97,399.15 80.30,398.90 C81.63,398.65 82.73,400.67 84.00,401.50 C85.27,402.33 86.07,403.55 87.90,403.90 C89.73,404.25 92.15,403.80 95.00,403.60 C97.85,403.40 101.67,402.62 105.00,402.70 C108.33,402.78 109.17,403.85 115.00,404.10 C120.83,404.35 135.00,404.05 140.00,404.20 C145.00,404.35 140.83,404.87 145.00,405.00 C149.17,405.13 155.83,404.92 165.00,405.00 C174.17,405.08 189.17,405.40 200.00,405.50 C210.83,405.60 223.67,405.43 230.00,405.60 C236.33,405.77 235.33,406.40 238.00,406.50 C240.67,406.60 243.17,406.48 246.00,406.20 C248.83,405.92 251.00,404.93 255.00,404.80 C259.00,404.67 263.50,405.28 270.00,405.40 C276.50,405.52 289.17,405.07 294.00,405.50 C298.83,405.93 297.33,406.58 299.00,408.00 C300.67,409.42 302.38,412.22 304.00,414.00 C305.62,415.78 307.20,418.70 308.70,418.70 C310.20,418.70 311.62,416.12 313.00,414.00 C314.38,411.88 315.72,407.90 317.00,406.00 C318.28,404.10 319.20,402.77 320.70,402.60 C322.20,402.43 324.37,404.17 326.00,405.00 C327.63,405.83 328.17,407.47 330.50,407.60 C332.83,407.73 331.75,405.93 340.00,405.80 C348.25,405.67 370.00,406.50 380.00,406.80 C390.00,407.10 395.00,407.13 400.00,407.60 C405.00,408.07 407.00,409.87 410.00,409.60 C413.00,409.33 415.50,407.00 418.00,406.00 C420.50,405.00 422.17,403.38 425.00,403.60 C427.83,403.82 431.67,406.93 435.00,407.30 C438.33,407.67 439.67,406.10 445.00,405.80 C450.33,405.50 462.17,406.13 467.00,405.50 C471.83,404.87 471.83,403.67 474.00,402.00 C476.17,400.33 478.20,397.00 480.00,395.50 C481.80,394.00 483.13,392.75 484.80,393.00 C486.47,393.25 488.47,395.17 490.00,397.00 C491.53,398.83 492.58,402.23 494.00,404.00 C495.42,405.77 496.50,407.23 498.50,407.60 C500.50,407.97 503.42,406.67 506.00,406.20 C508.58,405.73 511.50,405.17 514.00,404.80 C516.50,404.43 519.00,403.88 521.00,404.00 C523.00,404.12 525.17,405.25 526.00,405.50" stroke="#cbbb30" stroke-width="1.1" fill="none" stroke-linejoin="round"/><path d="M6.00,490.90 C12.25,490.90 36.50,490.80 43.50,490.90 C50.50,491.00 46.42,491.43 48.00,491.50 C49.58,491.57 51.42,491.38 53.00,491.30 C54.58,491.22 56.37,491.88 57.50,491.00 C58.63,490.12 59.02,487.88 59.80,486.00 C60.58,484.12 61.32,483.08 62.20,479.70 C63.08,476.32 64.13,470.18 65.10,465.70 C66.07,461.22 67.28,455.65 68.00,452.80 C68.72,449.95 68.73,449.10 69.40,448.60 C70.07,448.10 70.48,448.90 72.00,449.80 C73.52,450.70 76.45,453.68 78.50,454.00 C80.55,454.32 82.35,452.28 84.30,451.70 C86.25,451.12 87.47,450.90 90.20,450.50 C92.93,450.10 98.18,449.62 100.70,449.30 C103.22,448.98 102.08,448.82 105.30,448.60 C108.52,448.38 104.22,448.07 120.00,448.00 C135.78,447.93 180.55,448.43 200.00,448.20 C219.45,447.97 228.92,446.53 236.70,446.60 C244.48,446.67 243.98,448.50 246.70,448.60 C249.42,448.70 247.45,447.37 253.00,447.20 C258.55,447.03 272.83,447.72 280.00,447.60 C287.17,447.48 292.33,447.77 296.00,446.50 C299.67,445.23 300.00,442.05 302.00,440.00 C304.00,437.95 306.00,433.70 308.00,434.20 C310.00,434.70 312.00,440.33 314.00,443.00 C316.00,445.67 317.33,449.88 320.00,450.20 C322.67,450.52 326.67,445.43 330.00,444.90 C333.33,444.37 330.00,446.65 340.00,447.00 C350.00,447.35 378.33,447.68 390.00,447.00 C401.67,446.32 404.67,442.57 410.00,442.90 C415.33,443.23 419.00,448.38 422.00,449.00 C425.00,449.62 421.67,446.85 428.00,446.60 C434.33,446.35 453.00,447.27 460.00,447.50 C467.00,447.73 467.17,447.08 470.00,448.00 C472.83,448.92 474.67,451.13 477.00,453.00 C479.33,454.87 481.83,459.20 484.00,459.20 C486.17,459.20 488.00,455.38 490.00,453.00 C492.00,450.62 492.67,445.90 496.00,444.90 C499.33,443.90 505.00,446.48 510.00,447.00 C515.00,447.52 523.33,447.83 526.00,448.00" stroke="#a658a8" stroke-width="1.0" fill="none" stroke-linejoin="round"/><path d="M27.50,564.90 C30.42,564.90 39.83,564.90 45.00,564.90 C50.17,564.90 55.63,565.72 58.50,564.90 C61.37,564.08 60.95,563.32 62.20,560.00 C63.45,556.68 64.82,549.13 66.00,545.00 C67.18,540.87 68.18,537.15 69.30,535.20 C70.42,533.25 71.58,533.00 72.70,533.30 C73.82,533.60 74.87,535.50 76.00,537.00 C77.13,538.50 78.17,542.05 79.50,542.30 C80.83,542.55 82.38,539.60 84.00,538.50 C85.62,537.40 87.37,535.92 89.20,535.70 C91.03,535.48 91.62,536.95 95.00,537.20 C98.38,537.45 106.08,537.47 109.50,537.20 C112.92,536.93 113.75,535.90 115.50,535.60 C117.25,535.30 111.75,535.45 120.00,535.40 C128.25,535.35 156.67,535.47 165.00,535.30 C173.33,535.13 159.72,534.68 170.00,534.40 C180.28,534.12 213.92,533.80 226.70,533.60 C239.48,533.40 242.27,532.85 246.70,533.20 C251.13,533.55 251.08,535.67 253.30,535.70 C255.52,535.73 255.55,533.68 260.00,533.40 C264.45,533.12 275.00,534.07 280.00,534.00 C285.00,533.93 287.33,533.42 290.00,533.00 C292.67,532.58 294.00,534.00 296.00,531.50 C298.00,529.00 300.00,522.03 302.00,518.00 C304.00,513.97 306.00,505.97 308.00,507.30 C310.00,508.63 312.00,520.88 314.00,526.00 C316.00,531.12 317.47,537.33 320.00,538.00 C322.53,538.67 325.87,530.83 329.20,530.00 C332.53,529.17 333.20,532.50 340.00,533.00 C346.80,533.50 361.67,533.42 370.00,533.00 C378.33,532.58 383.33,531.47 390.00,530.50 C396.67,529.53 404.67,526.28 410.00,527.20 C415.33,528.12 418.00,535.20 422.00,536.00 C426.00,536.80 426.83,532.33 434.00,532.00 C441.17,531.67 458.67,533.17 465.00,534.00 C471.33,534.83 469.83,535.67 472.00,537.00 C474.17,538.33 476.00,540.30 478.00,542.00 C480.00,543.70 482.00,547.37 484.00,547.20 C486.00,547.03 488.00,543.83 490.00,541.00 C492.00,538.17 492.67,531.53 496.00,530.20 C499.33,528.87 505.00,532.33 510.00,533.00 C515.00,533.67 523.33,534.00 526.00,534.20" stroke="#28966a" stroke-width="1.1" fill="none" stroke-linejoin="round"/><line x1="294.6" y1="352.2" x2="294.6" y2="427" stroke="#2aa452" stroke-width="1.1"/><line x1="317.6" y1="352.2" x2="317.6" y2="427" stroke="#9c1c28" stroke-width="1.1"/><path d="M276,384.5 H285" stroke="#2fb35a" stroke-width="1.6"/><path d="M283.5,380.3 L293.4,384.3 L283.5,388.3 Z" fill="#2fb35a"/><path d="M325,384.5 H335" stroke="#e02030" stroke-width="1.6"/><path d="M328.5,380.3 L318.6,384.3 L328.5,388.3 Z" fill="#e02030"/><path d="M57.3,352.9 H69 L64.3,357.6 V359.5 H62.3 V357.6 Z" fill="#e8762c"/><path d="M57.9,359.4 H68.4 V370.3 H65.4 L63.3,373.6 L61.2,370.3 H57.9 Z" fill="#0d0d0d" stroke="#e8762c" stroke-width="1.5"/><path d="M9.4,353.4 H21.4 L27.6,360.1 L21.4,365.9 H9.4 Q7.7,365.9 7.7,364.2 V355.1 Q7.7,353.4 9.4,353.4 Z" fill="#1a1a10" stroke="#cbbb30" stroke-width="1.1"/><line x1="5.5" y1="361.2" x2="7.7" y2="361.2" stroke="#cbbb30" stroke-width="1"/><path d="M9,440.9 H22 L28.3,447.8 L22,454.7 H9 Q7.3,454.7 7.3,453 V442.6 Q7.3,440.9 9,440.9 Z" fill="#0e0a10" stroke="#a658a8" stroke-width="1.2"/><path d="M9,558.4 H22 L28.4,565 L22,571.8 H9 Q7.2,571.8 7.2,570 V560.2 Q7.2,558.4 9,558.4 Z" fill="#3cb888"/><path d="M560.6,356.8 H580.3 V375.5 Z" fill="#626262"/><circle cx="576" cy="360.5" r="2.5" fill="#505050" stroke="#c4c4c4" stroke-width="1.2"/><line x1="574.2" y1="362.4" x2="570.6" y2="365.8" stroke="#c4c4c4" stroke-width="1.4"/>
</svg>
<div style="position:absolute;left:3.40px;top:9.00px;font-weight:bold;font-size:16.8px;line-height:16.8px;font-family:'Liberation Sans',serif;color:#fff;white-space:pre;z-index:5;transform:scaleX(1.0065);transform-origin:left;-webkit-text-stroke:0.3px #fff;">Measurement Report</div><div style="position:absolute;left:476.80px;top:33.00px;font-weight:normal;font-size:10px;line-height:10px;font-family:'Liberation Sans',serif;color:#000;white-space:pre;z-index:5;transform:scaleX(0.9240);transform-origin:left;-webkit-text-stroke:0.3px #000;">2024-05-29T14:28:02+05:30</div><div style="position:absolute;left:514.54px;top:7.00px;font-weight:bold;font-size:20.4px;line-height:20.4px;font-family:'Liberation Sans',serif;color:#fff;white-space:pre;z-index:5;transform:scaleX(0.8328);transform-origin:left;-webkit-text-stroke:0.6px #fff;">e</div><div style="position:absolute;left:538.30px;top:7.00px;font-weight:bold;font-size:20.4px;line-height:20.4px;font-family:'Liberation Sans',serif;color:#fff;white-space:pre;z-index:5;transform:scaleX(0.9110);transform-origin:left;-webkit-text-stroke:0.7px #fff;">tronix</div><div style="position:absolute;left:3.30px;top:52.00px;font-weight:bold;font-size:10.3px;line-height:10.3px;font-family:'Liberation Sans',serif;color:#000;white-space:pre;z-index:5;transform:scaleX(1.0439);transform-origin:left;-webkit-text-stroke:0.3px #000;">Setup Configuration</div><div style="position:absolute;left:3.10px;top:133.00px;font-weight:bold;font-size:10.3px;line-height:10.3px;font-family:'Liberation Sans',serif;color:#000;white-space:pre;z-index:5;transform:scaleX(1.0465);transform-origin:left;-webkit-text-stroke:0.3px #000;">Waveform Histogram Results</div><div style="position:absolute;left:2.73px;top:153.00px;font-weight:normal;font-size:9.0px;line-height:9.0px;font-family:'Liberation Serif',serif;color:#000;white-space:pre;z-index:5;transform:scaleX(1.0295);transform-origin:left;-webkit-text-stroke:0.3px #000;">No Waveform Histogram Results Available</div><div style="position:absolute;left:2.00px;top:202.00px;font-weight:bold;font-size:10.6px;line-height:10.6px;font-family:'Liberation Sans',serif;color:#000;white-space:pre;z-index:5;transform:scaleX(1.0301);transform-origin:left;-webkit-text-stroke:0.3px #000;">Measurement Results</div><div style="position:absolute;left:3.00px;top:320.00px;font-weight:bold;font-size:9.0px;line-height:9.0px;font-family:'Liberation Sans',serif;color:#000;white-space:pre;z-index:5;transform:scaleX(1.0137);transform-origin:left;-webkit-text-stroke:0.3px #000;">Views</div><div style="position:absolute;left:3.00px;top:329.00px;font-weight:normal;font-size:8.6px;line-height:8.6px;font-family:'Liberation Sans',serif;color:#000;white-space:pre;z-index:5;transform:scaleX(0.9813);transform-origin:left;-webkit-text-stroke:0.3px #000;">Time Domain View</div><div style="position:absolute;left:4.78px;top:73.00px;font-weight:bold;font-size:8.0px;line-height:8.0px;font-family:'Liberation Sans',serif;color:#000;white-space:pre;z-index:5;transform:scaleX(0.9633);transform-origin:left;-webkit-text-stroke:0.3px #000;">Scope Details</div><div style="position:absolute;left:4.78px;top:81.00px;font-weight:bold;font-size:8.3px;line-height:8.3px;font-family:'Liberation Sans',serif;color:#000;white-space:pre;z-index:5;transform:scaleX(0.9212);transform-origin:left;-webkit-text-stroke:0.3px #000;">Scope Model Number</div><div style="position:absolute;left:4.29px;top:93.00px;font-weight:normal;font-size:8.3px;line-height:8.3px;font-family:'Liberation Sans',serif;color:#000;white-space:pre;z-index:5;transform:scaleX(1.0411);transform-origin:left;-webkit-text-stroke:0.3px #000;">MSO58</div><div style="position:absolute;left:151.78px;top:81.00px;font-weight:bold;font-size:8.3px;line-height:8.3px;font-family:'Liberation Sans',serif;color:#000;white-space:pre;z-index:5;transform:scaleX(0.9206);transform-origin:left;-webkit-text-stroke:0.3px #000;">Scope Serial Number</div><div style="position:absolute;left:151.58px;top:93.00px;font-weight:normal;font-size:8.3px;line-height:8.3px;font-family:'Liberation Sans',serif;color:#000;white-space:pre;z-index:5;transform:scaleX(1.0635);transform-origin:left;-webkit-text-stroke:0.3px #000;">Q100086</div><div style="position:absolute;left:300.01px;top:81.00px;font-weight:bold;font-size:8.3px;line-height:8.3px;font-family:'Liberation Sans',serif;color:#000;white-space:pre;z-index:5;transform:scaleX(0.9267);transform-origin:left;-webkit-text-stroke:0.3px #000;">TekScope Version</div><div style="position:absolute;left:299.56px;top:93.00px;font-weight:normal;font-size:8.3px;line-height:8.3px;font-family:'Liberation Sans',serif;color:#000;white-space:pre;z-index:5;transform:scaleX(1.0480);transform-origin:left;-webkit-text-stroke:0.3px #000;">2.10.2</div><div style="position:absolute;left:447.28px;top:81.00px;font-weight:bold;font-size:8.3px;line-height:8.3px;font-family:'Liberation Sans',serif;color:#000;white-space:pre;z-index:5;transform:scaleX(0.9281);transform-origin:left;-webkit-text-stroke:0.3px #000;">Scope Calibration Status</div><div style="position:absolute;left:446.77px;top:93.00px;font-weight:normal;font-size:8.3px;line-height:8.3px;font-family:'Liberation Sans',serif;color:#000;white-space:pre;z-index:5;transform:scaleX(1.0650);transform-origin:left;-webkit-text-stroke:0.3px #000;">Pass</div><div style="position:absolute;left:4.55px;top:226.00px;font-weight:bold;font-size:7.7px;line-height:7.7px;font-family:'Liberation Sans',serif;color:#000;white-space:pre;z-index:5;-webkit-text-stroke:0.3px #000;">Name</div><div style="position:absolute;left:43.98px;top:222.00px;font-weight:bold;font-size:7.7px;line-height:7.7px;font-family:'Liberation Sans',serif;color:#000;white-space:pre;z-index:5;-webkit-text-stroke:0.3px #000;">Measure</div><div style="position:absolute;left:43.98px;top:231.00px;font-weight:bold;font-size:7.7px;line-height:7.7px;font-family:'Liberation Sans',serif;color:#000;white-space:pre;z-index:5;-webkit-text-stroke:0.3px #000;">ment</div><div style="position:absolute;left:83.40px;top:226.00px;font-weight:bold;font-size:7.7px;line-height:7.7px;font-family:'Liberation Sans',serif;color:#000;white-space:pre;z-index:5;-webkit-text-stroke:0.3px #000;">Src(s)</div><div style="position:absolute;left:122.83px;top:226.00px;font-weight:bold;font-size:7.7px;line-height:7.7px;font-family:'Liberation Sans',serif;color:#000;white-space:pre;z-index:5;-webkit-text-stroke:0.3px #000;">Mean&#x27;</div><div style="position:absolute;left:162.26px;top:226.00px;font-weight:bold;font-size:7.7px;line-height:7.7px;font-family:'Liberation Sans',serif;color:#000;white-space:pre;z-index:5;-webkit-text-stroke:0.3px #000;">Min&#x27;</div><div style="position:absolute;left:201.68px;top:226.00px;font-weight:bold;font-size:7.7px;line-height:7.7px;font-family:'Liberation Sans',serif;color:#000;white-space:pre;z-index:5;-webkit-text-stroke:0.3px #000;">Max&#x27;</div><div style="position:absolute;left:241.11px;top:226.00px;font-weight:bold;font-size:7.7px;line-height:7.7px;font-family:'Liberation Sans',serif;color:#000;white-space:pre;z-index:5;-webkit-text-stroke:0.3px #000;">Pk-Pk&#x27;</div><div style="position:absolute;left:280.54px;top:226.00px;font-weight:bold;font-size:7.7px;line-height:7.7px;font-family:'Liberation Sans',serif;color:#000;white-space:pre;z-index:5;-webkit-text-stroke:0.3px #000;">Std Dev&#x27;</div><div style="position:absolute;left:319.96px;top:222.00px;font-weight:bold;font-size:7.7px;line-height:7.7px;font-family:'Liberation Sans',serif;color:#000;white-space:pre;z-index:5;-webkit-text-stroke:0.3px #000;">Populatio</div><div style="position:absolute;left:319.96px;top:231.00px;font-weight:bold;font-size:7.7px;line-height:7.7px;font-family:'Liberation Sans',serif;color:#000;white-space:pre;z-index:5;-webkit-text-stroke:0.3px #000;">n&#x27;</div><div style="position:absolute;left:359.39px;top:222.00px;font-weight:bold;font-size:7.7px;line-height:7.7px;font-family:'Liberation Sans',serif;color:#000;white-space:pre;z-index:5;-webkit-text-stroke:0.3px #000;">Accum</div><div style="position:absolute;left:359.39px;top:231.00px;font-weight:bold;font-size:7.7px;line-height:7.7px;font-family:'Liberation Sans',serif;color:#000;white-space:pre;z-index:5;-webkit-text-stroke:0.3px #000;">Mean</div><div style="position:absolute;left:398.82px;top:222.00px;font-weight:bold;font-size:7.7px;line-height:7.7px;font-family:'Liberation Sans',serif;color:#000;white-space:pre;z-index:5;-webkit-text-stroke:0.3px #000;">Accum</div><div style="position:absolute;left:398.82px;top:231.00px;font-weight:bold;font-size:7.7px;line-height:7.7px;font-family:'Liberation Sans',serif;color:#000;white-space:pre;z-index:5;-webkit-text-stroke:0.3px #000;">Min</div><div style="position:absolute;left:438.24px;top:222.00px;font-weight:bold;font-size:7.7px;line-height:7.7px;font-family:'Liberation Sans',serif;color:#000;white-space:pre;z-index:5;-webkit-text-stroke:0.3px #000;">Accum</div><div style="position:absolute;left:438.24px;top:231.00px;font-weight:bold;font-size:7.7px;line-height:7.7px;font-family:'Liberation Sans',serif;color:#000;white-space:pre;z-index:5;-webkit-text-stroke:0.3px #000;">Max</div><div style="position:absolute;left:477.67px;top:222.00px;font-weight:bold;font-size:7.7px;line-height:7.7px;font-family:'Liberation Sans',serif;color:#000;white-space:pre;z-index:5;-webkit-text-stroke:0.3px #000;">Accum</div><div style="position:absolute;left:477.67px;top:231.00px;font-weight:bold;font-size:7.7px;line-height:7.7px;font-family:'Liberation Sans',serif;color:#000;white-space:pre;z-index:5;-webkit-text-stroke:0.3px #000;">Pk-Pk</div><div style="position:absolute;left:517.10px;top:222.00px;font-weight:bold;font-size:7.7px;line-height:7.7px;font-family:'Liberation Sans',serif;color:#000;white-space:pre;z-index:5;-webkit-text-stroke:0.3px #000;">Accum</div><div style="position:absolute;left:517.10px;top:231.00px;font-weight:bold;font-size:7.7px;line-height:7.7px;font-family:'Liberation Sans',serif;color:#000;white-space:pre;z-index:5;-webkit-text-stroke:0.3px #000;">Std Dev</div><div style="position:absolute;left:556.52px;top:222.00px;font-weight:bold;font-size:7.7px;line-height:7.7px;font-family:'Liberation Sans',serif;color:#000;white-space:pre;z-index:5;-webkit-text-stroke:0.3px #000;">Accum</div><div style="position:absolute;left:556.52px;top:231.00px;font-weight:bold;font-size:7.7px;line-height:7.7px;font-family:'Liberation Sans',serif;color:#000;white-space:pre;z-index:5;-webkit-text-stroke:0.3px #000;">Pop</div><div style="position:absolute;left:4.55px;top:241.00px;font-weight:normal;font-size:8.45px;line-height:8.45px;font-family:'Liberation Sans',serif;color:#000;white-space:pre;z-index:5;-webkit-text-stroke:0.3px #000;">Meas 1</div><div style="position:absolute;left:43.98px;top:241.00px;font-weight:normal;font-size:8.45px;line-height:8.45px;font-family:'Liberation Sans',serif;color:#000;white-space:pre;z-index:5;-webkit-text-stroke:0.3px #000;">TDR: Z</div><div style="position:absolute;left:83.40px;top:241.00px;font-weight:normal;font-size:8.45px;line-height:8.45px;font-family:'Liberation Sans',serif;color:#000;white-space:pre;z-index:5;-webkit-text-stroke:0.3px #000;">Ref 1</div><div style="position:absolute;left:122.83px;top:241.00px;font-weight:normal;font-size:8.45px;line-height:8.45px;font-family:'Liberation Sans',serif;color:#000;white-space:pre;z-index:5;-webkit-text-stroke:0.3px #000;">70.653</div><div style="position:absolute;left:122.83px;top:250.00px;font-weight:normal;font-size:8.45px;line-height:8.45px;font-family:'Liberation Sans',serif;color:#000;white-space:pre;z-index:5;-webkit-text-stroke:0.3px #000;">Ohms</div><div style="position:absolute;left:162.26px;top:241.00px;font-weight:normal;font-size:8.45px;line-height:8.45px;font-family:'Liberation Sans',serif;color:#000;white-space:pre;z-index:5;-webkit-text-stroke:0.3px #000;">70.653</div><div style="position:absolute;left:162.26px;top:250.00px;font-weight:normal;font-size:8.45px;line-height:8.45px;font-family:'Liberation Sans',serif;color:#000;white-space:pre;z-index:5;-webkit-text-stroke:0.3px #000;">Ohms</div><div style="position:absolute;left:201.68px;top:241.00px;font-weight:normal;font-size:8.45px;line-height:8.45px;font-family:'Liberation Sans',serif;color:#000;white-space:pre;z-index:5;-webkit-text-stroke:0.3px #000;">70.653</div><div style="position:absolute;left:201.68px;top:250.00px;font-weight:normal;font-size:8.45px;line-height:8.45px;font-family:'Liberation Sans',serif;color:#000;white-space:pre;z-index:5;-webkit-text-stroke:0.3px #000;">Ohms</div><div style="position:absolute;left:241.11px;top:241.00px;font-weight:normal;font-size:8.45px;line-height:8.45px;font-family:'Liberation Sans',serif;color:#000;white-space:pre;z-index:5;-webkit-text-stroke:0.3px #000;">0.0000</div><div style="position:absolute;left:241.11px;top:250.00px;font-weight:normal;font-size:8.45px;line-height:8.45px;font-family:'Liberation Sans',serif;color:#000;white-space:pre;z-index:5;-webkit-text-stroke:0.3px #000;">Ohms</div><div style="position:absolute;left:280.54px;top:241.00px;font-weight:normal;font-size:8.45px;line-height:8.45px;font-family:'Liberation Sans',serif;color:#000;white-space:pre;z-index:5;-webkit-text-stroke:0.3px #000;">0.0000</div><div style="position:absolute;left:280.54px;top:250.00px;font-weight:normal;font-size:8.45px;line-height:8.45px;font-family:'Liberation Sans',serif;color:#000;white-space:pre;z-index:5;-webkit-text-stroke:0.3px #000;">Ohms</div><div style="position:absolute;left:319.96px;top:241.00px;font-weight:normal;font-size:8.45px;line-height:8.45px;font-family:'Liberation Sans',serif;color:#000;white-space:pre;z-index:5;-webkit-text-stroke:0.3px #000;">1</div><div style="position:absolute;left:359.39px;top:241.00px;font-weight:normal;font-size:8.45px;line-height:8.45px;font-family:'Liberation Sans',serif;color:#000;white-space:pre;z-index:5;-webkit-text-stroke:0.3px #000;">70.653</div><div style="position:absolute;left:359.39px;top:250.00px;font-weight:normal;font-size:8.45px;line-height:8.45px;font-family:'Liberation Sans',serif;color:#000;white-space:pre;z-index:5;-webkit-text-stroke:0.3px #000;">Ohms</div><div style="position:absolute;left:398.82px;top:241.00px;font-weight:normal;font-size:8.45px;line-height:8.45px;font-family:'Liberation Sans',serif;color:#000;white-space:pre;z-index:5;-webkit-text-stroke:0.3px #000;">70.653</div><div style="position:absolute;left:398.82px;top:250.00px;font-weight:normal;font-size:8.45px;line-height:8.45px;font-family:'Liberation Sans',serif;color:#000;white-space:pre;z-index:5;-webkit-text-stroke:0.3px #000;">Ohms</div><div style="position:absolute;left:438.24px;top:241.00px;font-weight:normal;font-size:8.45px;line-height:8.45px;font-family:'Liberation Sans',serif;color:#000;white-space:pre;z-index:5;-webkit-text-stroke:0.3px #000;">70.653</div><div style="position:absolute;left:438.24px;top:250.00px;font-weight:normal;font-size:8.45px;line-height:8.45px;font-family:'Liberation Sans',serif;color:#000;white-space:pre;z-index:5;-webkit-text-stroke:0.3px #000;">Ohms</div><div style="position:absolute;left:477.67px;top:241.00px;font-weight:normal;font-size:8.45px;line-height:8.45px;font-family:'Liberation Sans',serif;color:#000;white-space:pre;z-index:5;-webkit-text-stroke:0.3px #000;">0.0000</div><div style="position:absolute;left:477.67px;top:250.00px;font-weight:normal;font-size:8.45px;line-height:8.45px;font-family:'Liberation Sans',serif;color:#000;white-space:pre;z-index:5;-webkit-text-stroke:0.3px #000;">Ohms</div><div style="position:absolute;left:517.10px;top:241.00px;font-weight:normal;font-size:8.45px;line-height:8.45px;font-family:'Liberation Sans',serif;color:#000;white-space:pre;z-index:5;-webkit-text-stroke:0.3px #000;">0.0000</div><div style="position:absolute;left:517.10px;top:250.00px;font-weight:normal;font-size:8.45px;line-height:8.45px;font-family:'Liberation Sans',serif;color:#000;white-space:pre;z-index:5;-webkit-text-stroke:0.3px #000;">Ohms</div><div style="position:absolute;left:556.52px;top:241.00px;font-weight:normal;font-size:8.45px;line-height:8.45px;font-family:'Liberation Sans',serif;color:#000;white-space:pre;z-index:5;-webkit-text-stroke:0.3px #000;">2</div><div style="position:absolute;left:43.98px;top:261.00px;font-weight:normal;font-size:8.45px;line-height:8.45px;font-family:'Liberation Sans',serif;color:#000;white-space:pre;z-index:5;-webkit-text-stroke:0.3px #000;">TDR: C</div><div style="position:absolute;left:83.40px;top:261.00px;font-weight:normal;font-size:8.45px;line-height:8.45px;font-family:'Liberation Sans',serif;color:#000;white-space:pre;z-index:5;-webkit-text-stroke:0.3px #000;">Ref 1</div><div style="position:absolute;left:122.83px;top:261.00px;font-weight:normal;font-size:8.45px;line-height:8.45px;font-family:'Liberation Sans',serif;color:#000;white-space:pre;z-index:5;-webkit-text-stroke:0.3px #000;">996.81 fF</div><div style="position:absolute;left:162.26px;top:261.00px;font-weight:normal;font-size:8.45px;line-height:8.45px;font-family:'Liberation Sans',serif;color:#000;white-space:pre;z-index:5;-webkit-text-stroke:0.3px #000;">996.81 fF</div><div style="position:absolute;left:201.68px;top:261.00px;font-weight:normal;font-size:8.45px;line-height:8.45px;font-family:'Liberation Sans',serif;color:#000;white-space:pre;z-index:5;-webkit-text-stroke:0.3px #000;">996.81 fF</div><div style="position:absolute;left:241.11px;top:261.00px;font-weight:normal;font-size:8.45px;line-height:8.45px;font-family:'Liberation Sans',serif;color:#000;white-space:pre;z-index:5;-webkit-text-stroke:0.3px #000;">0.0000 F</div><div style="position:absolute;left:280.54px;top:261.00px;font-weight:normal;font-size:8.45px;line-height:8.45px;font-family:'Liberation Sans',serif;color:#000;white-space:pre;z-index:5;-webkit-text-stroke:0.3px #000;">0.0000 F</div><div style="position:absolute;left:319.96px;top:261.00px;font-weight:normal;font-size:8.45px;line-height:8.45px;font-family:'Liberation Sans',serif;color:#000;white-space:pre;z-index:5;-webkit-text-stroke:0.3px #000;">1</div><div style="position:absolute;left:359.39px;top:261.00px;font-weight:normal;font-size:8.45px;line-height:8.45px;font-family:'Liberation Sans',serif;color:#000;white-space:pre;z-index:5;-webkit-text-stroke:0.3px #000;">996.81 fF</div><div style="position:absolute;left:398.82px;top:261.00px;font-weight:normal;font-size:8.45px;line-height:8.45px;font-family:'Liberation Sans',serif;color:#000;white-space:pre;z-index:5;-webkit-text-stroke:0.3px #000;">996.81 fF</div><div style="position:absolute;left:438.24px;top:261.00px;font-weight:normal;font-size:8.45px;line-height:8.45px;font-family:'Liberation Sans',serif;color:#000;white-space:pre;z-index:5;-webkit-text-stroke:0.3px #000;">996.81 fF</div><div style="position:absolute;left:477.67px;top:261.00px;font-weight:normal;font-size:8.45px;line-height:8.45px;font-family:'Liberation Sans',serif;color:#000;white-space:pre;z-index:5;-webkit-text-stroke:0.3px #000;">0.0000 F</div><div style="position:absolute;left:517.10px;top:261.00px;font-weight:normal;font-size:8.45px;line-height:8.45px;font-family:'Liberation Sans',serif;color:#000;white-space:pre;z-index:5;-webkit-text-stroke:0.3px #000;">0.0000 F</div><div style="position:absolute;left:556.52px;top:261.00px;font-weight:normal;font-size:8.45px;line-height:8.45px;font-family:'Liberation Sans',serif;color:#000;white-space:pre;z-index:5;-webkit-text-stroke:0.3px #000;">2</div><div style="position:absolute;left:43.98px;top:272.00px;font-weight:normal;font-size:8.45px;line-height:8.45px;font-family:'Liberation Sans',serif;color:#000;white-space:pre;z-index:5;-webkit-text-stroke:0.3px #000;">TDR: L</div><div style="position:absolute;left:83.40px;top:272.00px;font-weight:normal;font-size:8.45px;line-height:8.45px;font-family:'Liberation Sans',serif;color:#000;white-space:pre;z-index:5;-webkit-text-stroke:0.3px #000;">Ref 1</div><div style="position:absolute;left:122.83px;top:272.00px;font-weight:normal;font-size:8.45px;line-height:8.45px;font-family:'Liberation Sans',serif;color:#000;white-space:pre;z-index:5;-webkit-text-stroke:0.3px #000;">2.4920</div><div style="position:absolute;left:122.83px;top:281.00px;font-weight:normal;font-size:8.45px;line-height:8.45px;font-family:'Liberation Sans',serif;color:#000;white-space:pre;z-index:5;-webkit-text-stroke:0.3px #000;">nH</div><div style="position:absolute;left:162.26px;top:272.00px;font-weight:normal;font-size:8.45px;line-height:8.45px;font-family:'Liberation Sans',serif;color:#000;white-space:pre;z-index:5;-webkit-text-stroke:0.3px #000;">2.4920</div><div style="position:absolute;left:162.26px;top:281.00px;font-weight:normal;font-size:8.45px;line-height:8.45px;font-family:'Liberation Sans',serif;color:#000;white-space:pre;z-index:5;-webkit-text-stroke:0.3px #000;">nH</div><div style="position:absolute;left:201.68px;top:272.00px;font-weight:normal;font-size:8.45px;line-height:8.45px;font-family:'Liberation Sans',serif;color:#000;white-space:pre;z-index:5;-webkit-text-stroke:0.3px #000;">2.4920</div><div style="position:absolute;left:201.68px;top:281.00px;font-weight:normal;font-size:8.45px;line-height:8.45px;font-family:'Liberation Sans',serif;color:#000;white-space:pre;z-index:5;-webkit-text-stroke:0.3px #000;">nH</div><div style="position:absolute;left:241.11px;top:272.00px;font-weight:normal;font-size:8.45px;line-height:8.45px;font-family:'Liberation Sans',serif;color:#000;white-space:pre;z-index:5;-webkit-text-stroke:0.3px #000;">0.0000 H</div><div style="position:absolute;left:280.54px;top:272.00px;font-weight:normal;font-size:8.45px;line-height:8.45px;font-family:'Liberation Sans',serif;color:#000;white-space:pre;z-index:5;-webkit-text-stroke:0.3px #000;">0.0000 H</div><div style="position:absolute;left:319.96px;top:272.00px;font-weight:normal;font-size:8.45px;line-height:8.45px;font-family:'Liberation Sans',serif;color:#000;white-space:pre;z-index:5;-webkit-text-stroke:0.3px #000;">1</div><div style="position:absolute;left:359.39px;top:272.00px;font-weight:normal;font-size:8.45px;line-height:8.45px;font-family:'Liberation Sans',serif;color:#000;white-space:pre;z-index:5;-webkit-text-stroke:0.3px #000;">2.4920</div><div style="position:absolute;left:359.39px;top:281.00px;font-weight:normal;font-size:8.45px;line-height:8.45px;font-family:'Liberation Sans',serif;color:#000;white-space:pre;z-index:5;-webkit-text-stroke:0.3px #000;">nH</div><div style="position:absolute;left:398.82px;top:272.00px;font-weight:normal;font-size:8.45px;line-height:8.45px;font-family:'Liberation Sans',serif;color:#000;white-space:pre;z-index:5;-webkit-text-stroke:0.3px #000;">2.4920</div><div style="position:absolute;left:398.82px;top:281.00px;font-weight:normal;font-size:8.45px;line-height:8.45px;font-family:'Liberation Sans',serif;color:#000;white-space:pre;z-index:5;-webkit-text-stroke:0.3px #000;">nH</div><div style="position:absolute;left:438.24px;top:272.00px;font-weight:normal;font-size:8.45px;line-height:8.45px;font-family:'Liberation Sans',serif;color:#000;white-space:pre;z-index:5;-webkit-text-stroke:0.3px #000;">2.4920</div><div style="position:absolute;left:438.24px;top:281.00px;font-weight:normal;font-size:8.45px;line-height:8.45px;font-family:'Liberation Sans',serif;color:#000;white-space:pre;z-index:5;-webkit-text-stroke:0.3px #000;">nH</div><div style="position:absolute;left:477.67px;top:272.00px;font-weight:normal;font-size:8.45px;line-height:8.45px;font-family:'Liberation Sans',serif;color:#000;white-space:pre;z-index:5;-webkit-text-stroke:0.3px #000;">0.0000 H</div><div style="position:absolute;left:517.10px;top:272.00px;font-weight:normal;font-size:8.45px;line-height:8.45px;font-family:'Liberation Sans',serif;color:#000;white-space:pre;z-index:5;-webkit-text-stroke:0.3px #000;">0.0000 H</div><div style="position:absolute;left:556.52px;top:272.00px;font-weight:normal;font-size:8.45px;line-height:8.45px;font-family:'Liberation Sans',serif;color:#000;white-space:pre;z-index:5;-webkit-text-stroke:0.3px #000;">2</div><div style="position:absolute;left:12.96px;top:343.00px;font-weight:normal;font-size:8.6px;line-height:8.6px;font-family:'Liberation Sans',serif;color:#d2dae2;white-space:pre;z-index:5;transform:scaleX(0.9384);transform-origin:left;">Waveform View</div><div style="position:absolute;left:267.00px;top:372.00px;font-weight:normal;font-size:7.2px;line-height:7.2px;font-family:'Liberation Sans',serif;color:#2fb35a;white-space:pre;z-index:5;transform:scaleX(0.9970);transform-origin:left;">Meas 1</div><div style="position:absolute;left:320.80px;top:372.00px;font-weight:normal;font-size:7.2px;line-height:7.2px;font-family:'Liberation Sans',serif;color:#e02030;white-space:pre;z-index:5;transform:scaleX(1.0055);transform-origin:left;">Meas 1</div><div style="position:absolute;left:60.70px;top:362.00px;font-weight:bold;font-size:8.5px;line-height:8.5px;font-family:'Liberation Sans',serif;color:#e8762c;white-space:pre;z-index:5;">T</div><div style="position:absolute;left:11.77px;top:356.00px;font-weight:bold;font-size:7.4px;line-height:7.4px;font-family:'Liberation Sans',serif;color:#d0c040;white-space:pre;z-index:5;transform:scaleX(0.8704);transform-origin:left;">R 1</div><div style="position:absolute;left:10.69px;top:444.00px;font-weight:bold;font-size:7.4px;line-height:7.4px;font-family:'Liberation Sans',serif;color:#c060c8;white-space:pre;z-index:5;transform:scaleX(1.2348);transform-origin:left;">M2</div><div style="position:absolute;left:11.79px;top:562.00px;font-weight:bold;font-size:7.8px;line-height:7.8px;font-family:'Liberation Sans',serif;color:#103826;white-space:pre;z-index:5;transform:scaleX(0.7831);transform-origin:left;">M 1</div><div style="position:absolute;left:34.65px;top:382.00px;font-weight:normal;font-size:10.4px;line-height:10.4px;font-family:'Liberation Sans',serif;color:#d2c040;white-space:pre;z-index:5;transform:scaleX(1.0953);transform-origin:left;-webkit-text-stroke:0.45px #d2c040;">Voltage for L=2.5nH &amp; C=1.0pF</div><div style="position:absolute;left:38.78px;top:443.00px;font-weight:normal;font-size:10.2px;line-height:10.2px;font-family:'Liberation Sans',serif;color:#c070c0;white-space:pre;z-index:5;transform:scaleX(1.0973);transform-origin:left;-webkit-text-stroke:0.45px #c070c0;">Rho (meas1)</div><div style="position:absolute;left:36.85px;top:549.00px;font-weight:normal;font-size:10.2px;line-height:10.2px;font-family:'Liberation Sans',serif;color:#38b080;white-space:pre;z-index:5;transform:scaleX(1.0691);transform-origin:left;-webkit-text-stroke:0.45px #38b080;">Z (meas1)</div><div style="position:absolute;left:58.77px;top:565.00px;font-weight:normal;font-size:6.8px;line-height:6.8px;font-family:'Liberation Sans',serif;color:#a8a8a8;white-space:pre;z-index:5;">0 s</div><div style="position:absolute;left:111.00px;top:565.00px;font-weight:normal;font-size:6.8px;line-height:6.8px;font-family:'Liberation Sans',serif;color:#a8a8a8;white-space:pre;z-index:5;">400 ps</div><div style="position:absolute;left:169.10px;top:565.00px;font-weight:normal;font-size:6.8px;line-height:6.8px;font-family:'Liberation Sans',serif;color:#a8a8a8;white-space:pre;z-index:5;">800 ps</div><div style="position:absolute;left:227.94px;top:565.00px;font-weight:normal;font-size:6.8px;line-height:6.8px;font-family:'Liberation Sans',serif;color:#a8a8a8;white-space:pre;z-index:5;">1.2 ns</div><div style="position:absolute;left:285.84px;top:565.00px;font-weight:normal;font-size:6.8px;line-height:6.8px;font-family:'Liberation Sans',serif;color:#a8a8a8;white-space:pre;z-index:5;">1.6 ns</div><div style="position:absolute;left:346.58px;top:565.00px;font-weight:normal;font-size:6.8px;line-height:6.8px;font-family:'Liberation Sans',serif;color:#a8a8a8;white-space:pre;z-index:5;">2 ns</div><div style="position:absolute;left:401.24px;top:565.00px;font-weight:normal;font-size:6.8px;line-height:6.8px;font-family:'Liberation Sans',serif;color:#a8a8a8;white-space:pre;z-index:5;">2.4 ns</div><div style="position:absolute;left:459.14px;top:565.00px;font-weight:normal;font-size:6.8px;line-height:6.8px;font-family:'Liberation Sans',serif;color:#a8a8a8;white-space:pre;z-index:5;">2.8 ns</div><div style="position:absolute;left:517.14px;top:565.00px;font-weight:normal;font-size:6.8px;line-height:6.8px;font-family:'Liberation Sans',serif;color:#a8a8a8;white-space:pre;z-index:5;">3.2 ns</div><div style="position:absolute;left:552.84px;top:372.00px;font-weight:normal;font-size:7.2px;line-height:7.2px;font-family:'Liberation Sans',serif;color:#c4b43a;white-space:pre;z-index:5;-webkit-text-stroke:0.2px #c4b43a;">-39.4 mV</div><div style="position:absolute;left:552.84px;top:386.00px;font-weight:normal;font-size:7.2px;line-height:7.2px;font-family:'Liberation Sans',serif;color:#c4b43a;white-space:pre;z-index:5;-webkit-text-stroke:0.2px #c4b43a;">-78.8 mV</div><div style="position:absolute;left:549.38px;top:400.00px;font-weight:normal;font-size:7.2px;line-height:7.2px;font-family:'Liberation Sans',serif;color:#c4b43a;white-space:pre;z-index:5;-webkit-text-stroke:0.2px #c4b43a;">-118.2 mV</div><div style="position:absolute;left:548.84px;top:414.00px;font-weight:normal;font-size:7.2px;line-height:7.2px;font-family:'Liberation Sans',serif;color:#c4b43a;white-space:pre;z-index:5;-webkit-text-stroke:0.2px #c4b43a;">-157.6 mV</div><div style="position:absolute;left:543.95px;top:430.00px;font-weight:normal;font-size:7.2px;line-height:7.2px;font-family:'Liberation Sans',serif;color:#b85cc0;white-space:pre;z-index:5;-webkit-text-stroke:0.2px #b85cc0;">330.436 mρ</div><div style="position:absolute;left:571.92px;top:444.00px;font-weight:normal;font-size:7.2px;line-height:7.2px;font-family:'Liberation Sans',serif;color:#b85cc0;white-space:pre;z-index:5;-webkit-text-stroke:0.2px #b85cc0;">0 ρ</div><div style="position:absolute;left:541.55px;top:458.00px;font-weight:normal;font-size:7.2px;line-height:7.2px;font-family:'Liberation Sans',serif;color:#b85cc0;white-space:pre;z-index:5;-webkit-text-stroke:0.2px #b85cc0;">-330.436 mρ</div><div style="position:absolute;left:541.55px;top:473.00px;font-weight:normal;font-size:7.2px;line-height:7.2px;font-family:'Liberation Sans',serif;color:#b85cc0;white-space:pre;z-index:5;-webkit-text-stroke:0.2px #b85cc0;">-660.872 mρ</div><div style="position:absolute;left:541.55px;top:487.00px;font-weight:normal;font-size:7.2px;line-height:7.2px;font-family:'Liberation Sans',serif;color:#b85cc0;white-space:pre;z-index:5;-webkit-text-stroke:0.2px #b85cc0;">-991.308 mρ</div><div style="position:absolute;left:552.65px;top:503.00px;font-weight:normal;font-size:7.2px;line-height:7.2px;font-family:'Liberation Sans',serif;color:#38b884;white-space:pre;z-index:5;-webkit-text-stroke:0.2px #38b884;">95.253 Ω</div><div style="position:absolute;left:552.65px;top:518.00px;font-weight:normal;font-size:7.2px;line-height:7.2px;font-family:'Liberation Sans',serif;color:#38b884;white-space:pre;z-index:5;-webkit-text-stroke:0.2px #38b884;">71.440 Ω</div><div style="position:absolute;left:552.65px;top:532.00px;font-weight:normal;font-size:7.2px;line-height:7.2px;font-family:'Liberation Sans',serif;color:#38b884;white-space:pre;z-index:5;-webkit-text-stroke:0.2px #38b884;">47.626 Ω</div><div style="position:absolute;left:552.65px;top:546.00px;font-weight:normal;font-size:7.2px;line-height:7.2px;font-family:'Liberation Sans',serif;color:#38b884;white-space:pre;z-index:5;-webkit-text-stroke:0.2px #38b884;">23.813 Ω</div><div style="position:absolute;left:570.63px;top:561.00px;font-weight:normal;font-size:7.2px;line-height:7.2px;font-family:'Liberation Sans',serif;color:#38b884;white-space:pre;z-index:5;-webkit-text-stroke:0.2px #38b884;">0 Ω</div>
</div></body></html>
